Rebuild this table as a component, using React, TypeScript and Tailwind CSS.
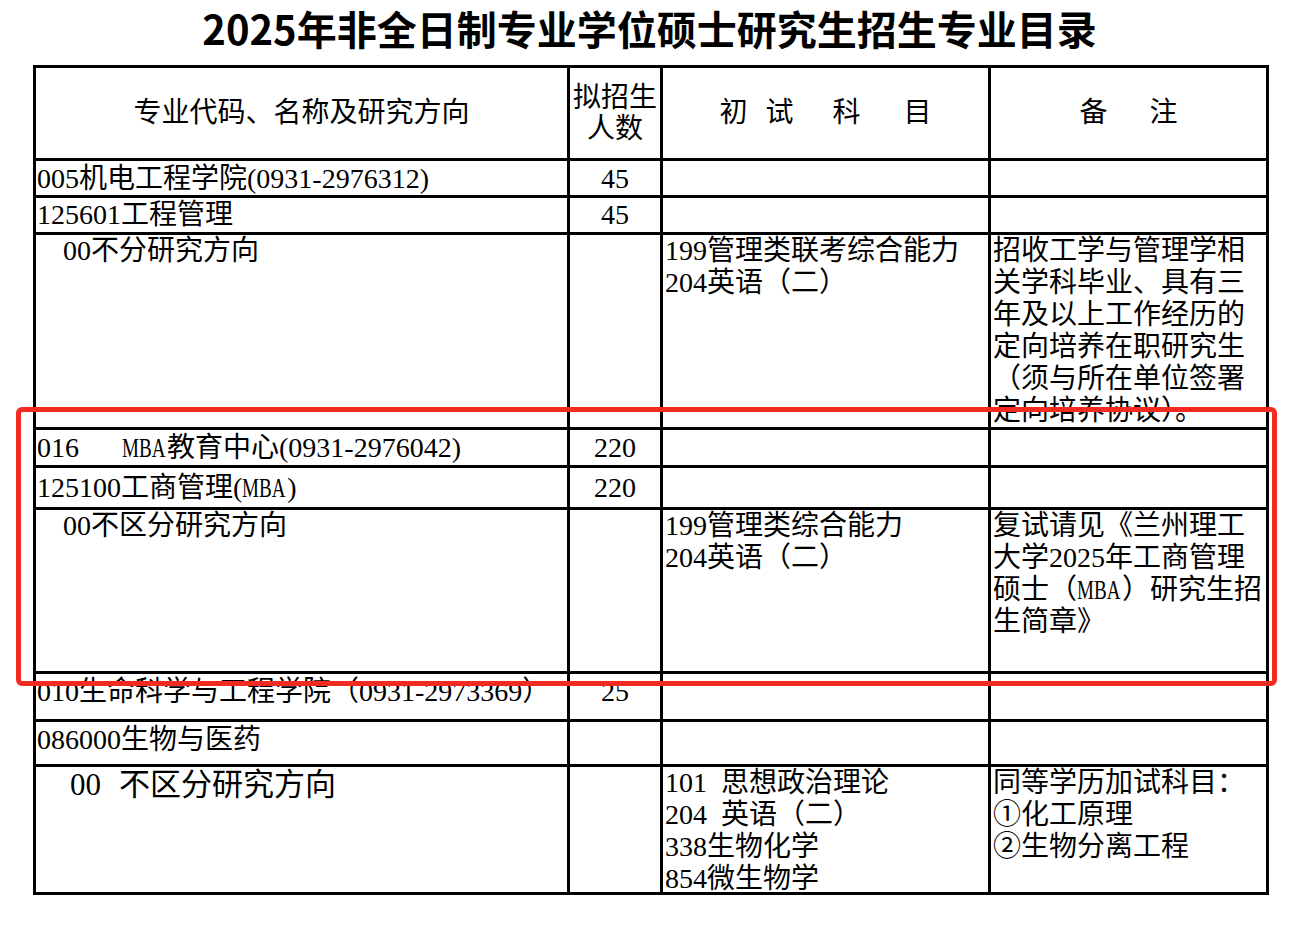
const cell = "border-r-[3px] border-b-[3px] border-black overflow-hidden whitespace-nowrap";
const C1 = cell + " w-[534px]";
const C2 = cell + " w-[93px] flex items-center justify-center";
const C3 = cell + " w-[328px]";
const C4 = cell + " w-[278px]";

// narrow latin caps, close to the half-width glyphs of the source document
function Caps({ children }: { children: string }) {
  return (
    <span className="inline-block w-[45px] align-top">
      <span className="inline-block origin-left scale-x-[0.68]">{children}</span>
    </span>
  );
}

function Lines({ lines, className = "" }: { lines: React.ReactNode[]; className?: string }) {
  return (
    <div className={"flex flex-col " + className}>
      {lines.map((l, i) => (
        <div key={i} className="h-[32px] leading-[32px]">
          {l}
        </div>
      ))}
    </div>
  );
}

export default function App() {
  return (
    <div className="relative w-[1299px] h-[933px] bg-white text-black font-['Liberation_Serif','Noto_Sans_CJK_SC',serif] text-[28px] leading-[32px]">
      <div className="h-[65px] pt-[4px] flex justify-center">
        <h1 className="font-['Noto_Sans_CJK_SC',sans-serif] font-bold text-[40px] leading-[48px]">
          2025年非全日制专业学位硕士研究生招生专业目录
        </h1>
      </div>

      <div className="ml-[33px] w-[1236px] border-l-[3px] border-t-[3px] border-black">
        {/* header */}
        <div className="flex h-[93px]">
          <div className={C1 + " flex items-center justify-center"}>专业代码、名称及研究方向</div>
          <div className={cell + " w-[93px] flex flex-col items-center justify-center leading-[31px]"}>
            <span>拟招生</span>
            <span>人数</span>
          </div>
          <div className={C3 + " flex items-center justify-center"}>
            <span>初</span>
            <span className="ml-[18px]">试</span>
            <span className="ml-[39px]">科</span>
            <span className="ml-[43px]">目</span>
          </div>
          <div className={C4 + " flex items-center justify-center"}>
            <span>备</span>
            <span className="ml-[42px]">注</span>
          </div>
        </div>

        <div className="flex h-[37px]">
          <div className={C1 + " flex items-center pl-[1px] pt-[2px]"}>005机电工程学院(0931-2976312)</div>
          <div className={C2 + " pt-[2px]"}>45</div>
          <div className={C3} />
          <div className={C4} />
        </div>

        <div className="flex h-[37px]">
          <div className={C1 + " flex items-center pl-[1px]"}>125601工程管理</div>
          <div className={C2}>45</div>
          <div className={C3} />
          <div className={C4} />
        </div>

        <div className="flex h-[195px]">
          <div className={C1 + " pl-[27px]"}>00不分研究方向</div>
          <div className={cell + " w-[93px]"} />
          <div className={C3 + " pl-[2px]"}>
            <Lines lines={["199管理类联考综合能力", "204英语（二）"]} />
          </div>
          <div className={C4 + " pl-[2px]"}>
            <Lines
              lines={[
                "招收工学与管理学相",
                "关学科毕业、具有三",
                "年及以上工作经历的",
                "定向培养在职研究生",
                "（须与所在单位签署",
                "定向培养协议）。",
              ]}
            />
          </div>
        </div>

        <div className="flex h-[38px]">
          <div className={C1 + " flex items-center pl-[1px]"}>
            <span>016</span>
            <span className="inline-block w-[43px]" />
            <Caps>MBA</Caps>
            <span>教育中心(0931-2976042)</span>
          </div>
          <div className={C2}>220</div>
          <div className={C3} />
          <div className={C4} />
        </div>

        <div className="flex h-[42px]">
          <div className={C1 + " flex items-center pl-[1px]"}>
            <span>125100工商管理(</span>
            <Caps>MBA</Caps>
            <span>)</span>
          </div>
          <div className={C2}>220</div>
          <div className={C3} />
          <div className={C4} />
        </div>

        <div className="flex h-[164px]">
          <div className={C1 + " pl-[27px]"}>00不区分研究方向</div>
          <div className={cell + " w-[93px]"} />
          <div className={C3 + " pl-[2px]"}>
            <Lines lines={["199管理类综合能力", "204英语（二）"]} />
          </div>
          <div className={C4 + " pl-[2px]"}>
            <Lines
              lines={[
                "复试请见《兰州理工",
                "大学2025年工商管理",
                <>
                  硕士（<Caps>MBA</Caps>）研究生招
                </>,
                "生简章》",
              ]}
            />
          </div>
        </div>

        <div className="flex h-[48px]">
          <div className={C1 + " pl-[1px] pt-[2px]"}>010生命科学与工程学院（0931-2973369）</div>
          <div className={cell + " w-[93px] flex justify-center pt-[2px]"}>25</div>
          <div className={C3} />
          <div className={C4} />
        </div>

        <div className="flex h-[45px]">
          <div className={C1 + " pl-[1px] pt-[2px]"}>086000生物与医药</div>
          <div className={cell + " w-[93px]"} />
          <div className={C3} />
          <div className={C4} />
        </div>

        <div className="flex h-[128px]">
          <div className={C1 + " pl-[34px] text-[31px] leading-[36px]"}>
            <span>00</span>
            <span className="ml-[18px]">不区分研究方向</span>
          </div>
          <div className={cell + " w-[93px]"} />
          <div className={C3 + " pl-[2px]"}>
            <Lines
              lines={[
                <>
                  101<span className="inline-block w-[14px]" />思想政治理论
                </>,
                <>
                  204<span className="inline-block w-[14px]" />英语（二）
                </>,
                "338生物化学",
                "854微生物学",
              ]}
            />
          </div>
          <div className={C4 + " pl-[2px]"}>
            <Lines lines={["同等学历加试科目：", "①化工原理", "②生物分离工程"]} />
          </div>
        </div>
      </div>

      {/* highlight frame drawn over the table */}
      <div className="absolute left-[16px] top-[407px] w-[1261px] h-[279px] border-[5px] border-[#f22b21] rounded-[6px] pointer-events-none" />
    </div>
  );
}
